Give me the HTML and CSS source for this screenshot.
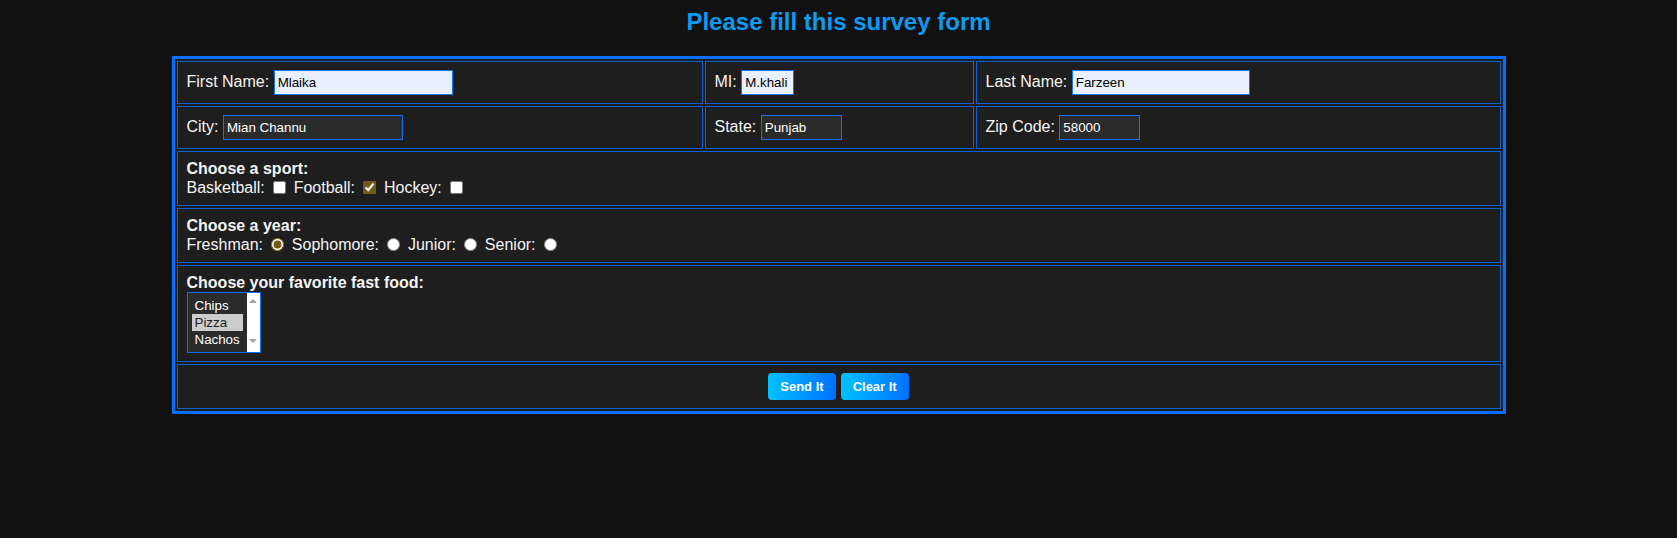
FILE: index.html
```html
<!DOCTYPE html>
<html lang="en">
<head>
<meta charset="utf-8">
<title>Survey Form</title>
<link rel="stylesheet" href="styles.css">
</head>
<body>
<h2 class="title">Please fill this survey form</h2>
<form class="survey">
<table class="grid">
<tr>
<td class="c1">First Name: <input class="field autofill w-first" type="text" value="Mlaika"></td>
<td class="c2">MI: <input class="field autofill w-mi" type="text" value="M.khali"></td>
<td class="c3">Last Name: <input class="field autofill w-last" type="text" value="Farzeen"></td>
</tr>
<tr>
<td>City: <input class="field w-city" type="text" value="Mian Channu"></td>
<td>State: <input class="field w-state" type="text" value="Punjab"></td>
<td>Zip Code: <input class="field w-zip" type="text" value="58000"></td>
</tr>
<tr>
<td colspan="3"><div class="q">Choose a sport:</div>Basketball: <input class="tick" type="checkbox"> Football: <input class="tick" type="checkbox" checked> Hockey: <input class="tick" type="checkbox"></td>
</tr>
<tr>
<td colspan="3"><div class="q">Choose a year:</div>Freshman: <input class="tick" type="radio" name="year" checked> Sophomore: <input class="tick" type="radio" name="year"> Junior: <input class="tick" type="radio" name="year"> Senior: <input class="tick" type="radio" name="year"></td>
</tr>
<tr>
<td colspan="3"><div class="q">Choose your favorite fast food:</div>
<div class="listbox" role="listbox">
<div class="opts">
<div class="opt" role="option">Chips</div>
<div class="opt sel" role="option">Pizza</div>
<div class="opt" role="option">Nachos</div>
</div>
<div class="sbar"><span class="arr up"></span><span class="arr down"></span></div>
</div>
</td>
</tr>
<tr>
<td colspan="3"><div class="actions"><button class="btn" type="submit">Send It</button><button class="btn" type="reset">Clear It</button></div></td>
</tr>
</table>
</form>
</body>
</html>
```

FILE: styles.css
```css
html, body {
  margin: 0;
  padding: 0;
  background: #111111;
}

body {
  font-family: "Liberation Sans", Arial, sans-serif;
  color: #f2f2f2;
}

.title {
  margin: 0;
  padding-top: 8px;
  font-size: 24px;
  line-height: 28px;
  font-weight: bold;
  text-align: center;
  color: #0b9bf0;
}

.survey {
  margin: 0;
}

.grid {
  width: 1334px;
  margin: 20px auto 0;
  table-layout: fixed;
  border: 3px solid #0a6efc;
  border-spacing: 2px;
  background: #1e1e1e;
}

.grid td {
  box-sizing: border-box;
  border: 1px solid #0b62d6;
  padding: 8px 9px;
  font-size: 16px;
  color: #f4f4f4;
}

.grid td.c1 { width: 526px; }
.grid td.c2 { width: 269px; }
.grid td.c3 { width: 525px; }

.field {
  box-sizing: border-box;
  height: 25px;
  margin: 0;
  padding: 0 3px;
  border: 1px solid #1473f0;
  background: #2b2b2b;
  color: #ffffff;
  font-family: "Liberation Sans", Arial, sans-serif;
  font-size: 13.333px;
  outline: none;
}

.field.autofill {
  background: #e8f0fe;
  color: #000000;
}

.w-first { width: 179px; }
.w-mi { width: 53px; }
.w-last { width: 178px; }
.w-city { width: 180px; }
.w-state { width: 81px; }
.w-zip { width: 81px; }

.q {
  font-weight: bold;
}

.tick {
  width: 13px;
  height: 13px;
  margin: 3px 3px 3px 4px;
  accent-color: #6f5a16;
  vertical-align: -1px;
}

.listbox {
  box-sizing: border-box;
  display: flex;
  width: 74px;
  height: 61px;
  border: 1px solid #0a6efc;
  background: #2b2b2b;
  font-size: 13.333px;
}

.opts {
  flex: 1;
  padding: 4px;
}

.opt {
  height: 17px;
  line-height: 17px;
  padding: 0 3px;
  color: #ffffff;
  white-space: nowrap;
}

.opt.sel {
  background: #cdcdcd;
  color: #1e1e1e;
}

.sbar {
  width: 15px;
  background: #ffffff;
  display: flex;
  flex-direction: column;
  align-items: center;
  justify-content: space-between;
  padding: 6px 0 9px;
  box-sizing: border-box;
}

.arr {
  width: 0;
  height: 0;
  border-left: 4px solid transparent;
  border-right: 4px solid transparent;
}

.arr.up {
  border-bottom: 4px solid #a3a3a3;
}

.arr.down {
  border-top: 4px solid #a3a3a3;
}

.actions {
  display: flex;
  justify-content: center;
  gap: 5px;
}

.btn {
  height: 27px;
  padding: 0 12px;
  border: none;
  border-radius: 4px;
  background: linear-gradient(90deg, #00c2ff, #0070ff);
  color: #ffffff;
  font-family: "Liberation Sans", Arial, sans-serif;
  font-size: 13px;
  font-weight: bold;
  cursor: pointer;
}
```
